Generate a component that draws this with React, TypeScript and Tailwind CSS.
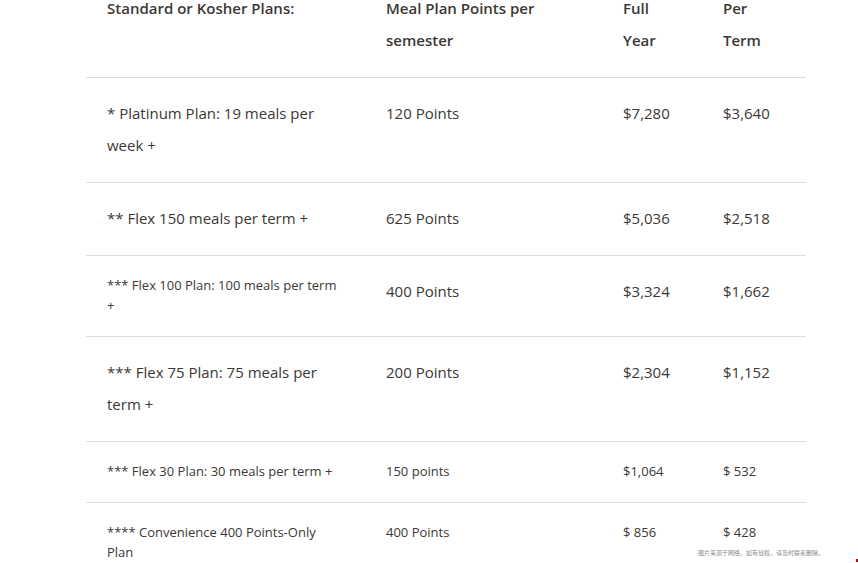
import React from 'react';

type Row = {
  plan: string;
  points: string;
  full: string;
  term: string;
  small?: boolean; // whole row in the small size
  smallPlan?: boolean; // only the first cell small
};

const rows: Row[] = [
  { plan: '* Platinum Plan: 19 meals per week +', points: '120 Points', full: '$7,280', term: '$3,640' },
  { plan: '** Flex 150 meals per term +', points: '625 Points', full: '$5,036', term: '$2,518' },
  { plan: '*** Flex 100 Plan: 100 meals per term +', points: '400 Points', full: '$3,324', term: '$1,662', smallPlan: true },
  { plan: '*** Flex 75 Plan: 75 meals per term +', points: '200 Points', full: '$2,304', term: '$1,152' },
  { plan: '*** Flex 30 Plan: 30 meals per term +', points: '150 points', full: '$1,064', term: '$ 532', small: true },
  { plan: '**** Convenience 400 Points-Only Plan', points: '400 Points', full: '$ 856', term: '$ 428', small: true },
];

const big = 'text-[15px] leading-[32px]';
const little = 'text-[13px] leading-[20px]';

export default function App() {
  return (
    <div className="relative h-[563px] w-[858px] overflow-hidden bg-white font-['Open_Sans',sans-serif] text-[#3b3835]">
      <table className="mt-[-28px] ml-[86px] w-[720px] table-fixed border-collapse">
        <colgroup>
          <col className="w-[279px]" />
          <col className="w-[237px]" />
          <col className="w-[100px]" />
          <col className="w-[104px]" />
        </colgroup>
        <thead>
          <tr className="border-b border-[#dcdcdc] align-top">
            <th className={`px-[21px] pt-5 pb-[21px] text-left font-semibold ${big}`}>Standard or Kosher Plans:</th>
            <th className={`px-[21px] pt-5 pb-[21px] text-left font-semibold ${big}`}>Meal Plan Points per semester</th>
            <th className={`px-[21px] pt-5 pb-[21px] text-left font-semibold ${big}`}>Full Year</th>
            <th className={`px-[21px] pt-5 pb-[21px] text-left font-semibold ${big}`}>Per Term</th>
          </tr>
        </thead>
        <tbody>
          {rows.map((r, i) => {
            const size = r.small ? little : big;
            return (
              <tr key={i} className="border-b border-[#dcdcdc] align-top last:border-b-0">
                <td className={`px-[21px] pt-[19px] pb-[21px] ${r.small || r.smallPlan ? little : big}`}>{r.plan}</td>
                <td className={`px-[21px] pt-[19px] pb-[21px] ${size}`}>{r.points}</td>
                <td className={`px-[21px] pt-[19px] pb-[21px] ${size}`}>{r.full}</td>
                <td className={`px-[21px] pt-[19px] pb-[21px] ${size}`}>{r.term}</td>
              </tr>
            );
          })}
        </tbody>
      </table>

      <div className="absolute left-[698px] top-[549px] whitespace-nowrap font-['Noto_Sans_CJK_SC',sans-serif] text-[6px] leading-[7px] text-[#8a8a8a]">
        图片来源于网络，如有侵权，请及时联系删除。
      </div>
      <div className="absolute right-0 bottom-[1px] h-[3px] w-[2px] bg-[#c00]" />
    </div>
  );
}
